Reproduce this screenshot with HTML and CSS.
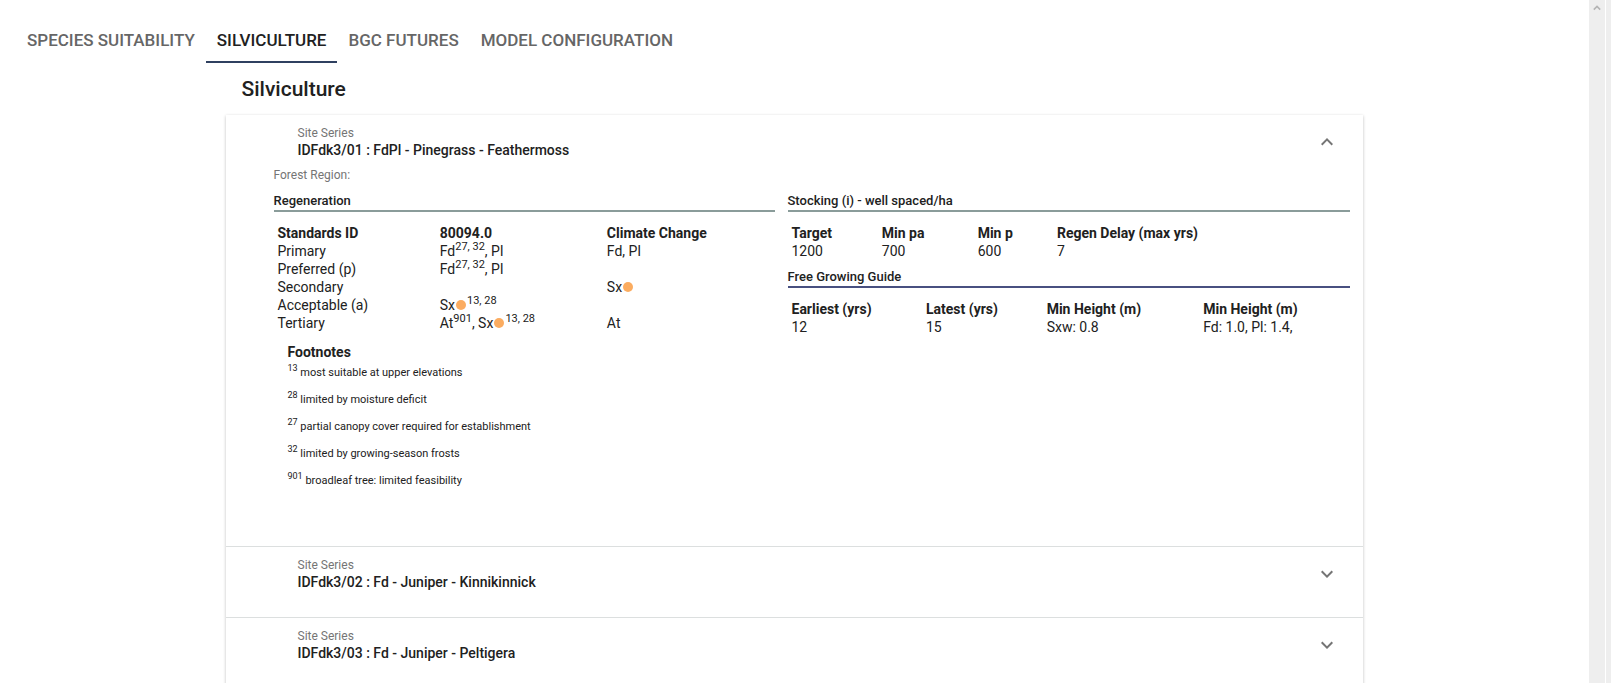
FILE: index.html
```html
<!DOCTYPE html>
<html lang="en">
<head>
<meta charset="utf-8">
<title>Silviculture</title>
<link rel="stylesheet" href="styles.css">
</head>
<body>
<div class="window">
  <div class="page">
    <nav class="tabs" role="tablist">
      <button class="tab" role="tab">SPECIES SUITABILITY</button>
      <button class="tab tab-active" role="tab" aria-selected="true">SILVICULTURE</button>
      <button class="tab" role="tab">BGC FUTURES</button>
      <button class="tab" role="tab">MODEL CONFIGURATION</button>
    </nav>
    <main class="content">
      <h1 class="title">Silviculture</h1>
      <div class="card">
        <section class="panel">
          <button class="summary" aria-expanded="true">
            <span class="summary-text"><span class="label">Site Series</span><span class="name">IDFdk3/01 : FdPl - Pinegrass - Feathermoss</span></span>
            <svg class="chevron" viewBox="0 0 24 24" aria-hidden="true"><path d="M12 8l-6 6 1.41 1.41L12 10.83l4.59 4.58L18 14z"/></svg>
          </button>
          <div class="details">
            <p class="region">Forest Region:</p>
            <div class="columns">
              <div class="column">
                <h2 class="heading">Regeneration</h2>
                <table class="data regeneration">
                  <colgroup><col class="c-standard"><col class="c-value"><col></colgroup>
                  <thead><tr><th>Standards ID</th><th>80094.0</th><th>Climate Change</th></tr></thead>
                  <tbody>
                    <tr><td>Primary</td><td>Fd<sup>27, 32</sup>, Pl</td><td>Fd, Pl</td></tr>
                    <tr><td>Preferred (p)</td><td>Fd<sup>27, 32</sup>, Pl</td><td></td></tr>
                    <tr><td>Secondary</td><td></td><td>Sx<span class="dot"></span></td></tr>
                    <tr><td>Acceptable (a)</td><td>Sx<span class="dot"></span><sup>13, 28</sup></td><td></td></tr>
                    <tr><td>Tertiary</td><td>At<sup>901</sup>, Sx<span class="dot"></span><sup>13, 28</sup></td><td>At</td></tr>
                  </tbody>
                </table>
                <div class="footnotes">
                  <h3 class="footnotes-title">Footnotes</h3>
                  <p class="note"><sup>13</sup> most suitable at upper elevations</p>
                  <p class="note"><sup>28</sup> limited by moisture deficit</p>
                  <p class="note"><sup>27</sup> partial canopy cover required for establishment</p>
                  <p class="note"><sup>32</sup> limited by growing-season frosts</p>
                  <p class="note"><sup>901</sup> broadleaf tree: limited feasibility</p>
                </div>
              </div>
              <div class="column">
                <h2 class="heading">Stocking (i) - well spaced/ha</h2>
                <table class="data">
                  <colgroup><col class="c-target"><col class="c-minpa"><col class="c-minp"><col></colgroup>
                  <thead><tr><th>Target</th><th>Min pa</th><th>Min p</th><th>Regen Delay (max yrs)</th></tr></thead>
                  <tbody><tr><td>1200</td><td>700</td><td>600</td><td>7</td></tr></tbody>
                </table>
                <h2 class="heading heading-blue">Free Growing Guide</h2>
                <table class="data">
                  <colgroup><col class="c-earliest"><col class="c-latest"><col class="c-height"><col></colgroup>
                  <thead><tr><th>Earliest (yrs)</th><th>Latest (yrs)</th><th>Min Height (m)</th><th>Min Height (m)</th></tr></thead>
                  <tbody><tr><td>12</td><td>15</td><td>Sxw: 0.8</td><td>Fd: 1.0, Pl: 1.4,</td></tr></tbody>
                </table>
              </div>
            </div>
          </div>
        </section>
        <section class="panel">
          <button class="summary" aria-expanded="false">
            <span class="summary-text"><span class="label">Site Series</span><span class="name">IDFdk3/02 : Fd - Juniper - Kinnikinnick</span></span>
            <svg class="chevron" viewBox="0 0 24 24" aria-hidden="true"><path d="M16.59 8.59L12 13.17 7.41 8.59 6 10l6 6 6-6z"/></svg>
          </button>
        </section>
        <section class="panel">
          <button class="summary" aria-expanded="false">
            <span class="summary-text"><span class="label">Site Series</span><span class="name">IDFdk3/03 : Fd - Juniper - Peltigera</span></span>
            <svg class="chevron" viewBox="0 0 24 24" aria-hidden="true"><path d="M16.59 8.59L12 13.17 7.41 8.59 6 10l6 6 6-6z"/></svg>
          </button>
        </section>
      </div>
    </main>
  </div>
  <div class="scrollbar" aria-hidden="true">
    <svg class="scroll-arrow" viewBox="0 0 10 6"><path d="M1 5l4-4 4 4" fill="none" stroke="#b4b4b4" stroke-width="2"/></svg>
  </div>
  <div class="edge"></div>
</div>
</body>
</html>
```

FILE: styles.css
```css
* { box-sizing: border-box; }

body {
  margin: 0;
  background: #fff;
  color: #212121;
  font-family: Roboto, "Liberation Sans", sans-serif;
  font-size: 14px;
  line-height: 16px;
}

button {
  border: 0;
  background: none;
  color: inherit;
  font: inherit;
  cursor: pointer;
}

h1, h2, h3, p { margin: 0; }

.window {
  display: grid;
  grid-template-columns: 1fr 16px 5px;
  column-gap: 1px;
  height: 100vh;
  overflow: hidden;
}

.page { min-width: 0; overflow: hidden; }

.tabs { display: flex; padding: 15px 16px 0; }

.tab {
  height: 48px;
  padding: 3px 11px 0;
  border-bottom: 2px solid transparent;
  color: #666;
  font-size: 17px;
  font-weight: 500;
}

.tab-active { border-color: #2f4060; color: #212121; }

.content { max-width: 1137px; margin: 0 auto; }

.title {
  padding: 10px 16px;
  font-size: 21px;
  font-weight: 500;
  line-height: 32px;
}

.card {
  background: #fff;
  box-shadow: 0 1px 3px rgba(0, 0, 0, 0.25);
}

.panel + .panel { border-top: 1px solid #dcdfdf; }

.summary {
  display: flex;
  align-items: flex-start;
  justify-content: space-between;
  width: 100%;
  padding: 10px 24px 0 72px;
  text-align: left;
}

.panel + .panel .summary { height: 70px; }

.summary-text { display: flex; flex-direction: column; }

.label, .region { color: #757575; font-size: 12px; font-weight: 400; line-height: 16px; }

.name { font-weight: 500; line-height: 18px; }

.chevron { width: 24px; height: 24px; margin-top: 5px; fill: #757575; }

.details { padding: 8px 13px 46px 48px; }

.columns {
  display: grid;
  grid-template-columns: 501fr 562fr;
  column-gap: 13px;
  padding-top: 9px;
}

.heading {
  border-bottom: 2px solid #8a9c9a;
  font-size: 13px;
  font-weight: 500;
  line-height: 18px;
}

.heading-blue { margin-top: 7px; border-color: #485080; }

.data {
  width: 100%;
  margin-top: 11px;
  border-collapse: separate;
  border-spacing: 2px;
  table-layout: fixed;
}

.data th, .data td {
  height: 16px;
  padding: 0 2px;
  line-height: 16px;
  text-align: left;
  vertical-align: middle;
  white-space: nowrap;
}

.data th { font-weight: 700; }

.c-standard { width: 32.5%; }
.c-value { width: 33.5%; }
.c-target { width: 16%; }
.c-minpa { width: 17%; }
.c-minp { width: 14%; }
.c-earliest { width: 24%; }
.c-latest { width: 21.5%; }
.c-height { width: 28%; }

sup { font-size: 11px; line-height: 0; }

.dot {
  display: inline-block;
  width: 10px;
  height: 10px;
  margin: 0 1px;
  border-radius: 50%;
  background: #fbac60;
  vertical-align: 0;
}

.footnotes { padding: 11px 14px 0; }

.footnotes-title { font-size: 14px; font-weight: 700; line-height: 16px; }

.note { margin-bottom: 11px; font-size: 11px; line-height: 16px; }

.footnotes-title + .note { margin-top: 5px; }

.note sup { font-size: 9px; }

.scrollbar { display: block; background: #eee; }

.scroll-arrow { display: block; width: 8px; height: 6px; margin: 5px auto 0; }

.edge { background: #eee; }
```
